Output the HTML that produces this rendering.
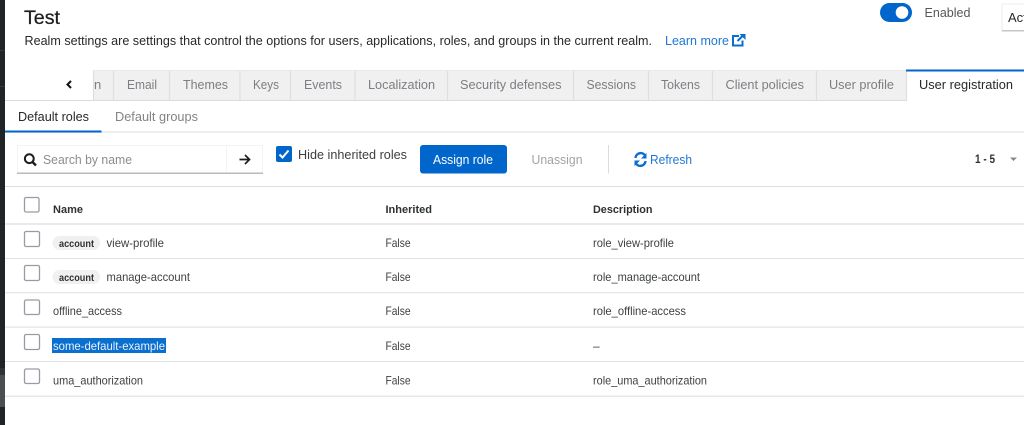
<!DOCTYPE html>
<html><head><meta charset="utf-8"><style>
html,body{margin:0;padding:0;background:#fff;overflow:hidden}
svg{display:block;filter:blur(0.3px)}
text{font-family:"Liberation Sans",sans-serif;font-size:12px;fill:#3c3f42}
.t{font-size:13px;fill:#7b7e82}
.b{font-weight:700;font-size:11px;fill:#2e3134}
.cb{fill:#fff;stroke:#9a9aa6;stroke-width:1.3}
</style></head><body>
<svg width="1024" height="425" viewBox="0 0 1024 425" xmlns="http://www.w3.org/2000/svg">
<rect width="1024" height="425" fill="#fff"/>
<rect width="5" height="425" fill="#212427"/>
<rect y="50" width="5" height="1" fill="#34373a"/><rect y="86" width="5" height="1" fill="#34373a"/>
<rect y="368" width="5" height="7" fill="#303336"/><rect y="375" width="5" height="32" fill="#4b4e51"/>

<text x="24" y="24" textLength="36" lengthAdjust="spacingAndGlyphs" style="font-size:19px;fill:#1c1e20;stroke:#1c1e20;stroke-width:.25">Test</text>
<text x="24.5" y="45" textLength="627.5" lengthAdjust="spacingAndGlyphs" style="font-size:13px;fill:#26282b">Realm settings are settings that control the options for users, applications, roles, and groups in the current realm.</text>
<text x="665" y="45" textLength="64" lengthAdjust="spacingAndGlyphs" style="font-size:13px;fill:#1f78d1">Learn more</text>
<g fill="none" stroke="#0a6fd0" stroke-width="2"><path d="M739 36h-6v9.5h9.5v-5"/><path d="M737.5 41l6.5-6.5"/></g><path d="M739.5 34h6v6z" fill="#0a6fd0"/>

<rect x="880" y="3" width="32" height="19" rx="9.5" fill="#0066cc"/><circle cx="902" cy="12.5" r="6.3" fill="#fff"/>
<text x="924.5" y="17" textLength="46" lengthAdjust="spacingAndGlyphs" style="font-size:13px;fill:#55585b">Enabled</text>
<rect x="1002" y="4" width="22" height="27" fill="#fff"/><path d="M1024 4h-22v27h22" fill="none" stroke="#eee"/><rect x="1002" y="30" width="22" height="1.5" fill="#c4c6c8"/>
<text x="1008" y="22" style="font-size:13px;fill:#26282b">Act</text>

<!-- tabs -->
<rect x="93" y="70" width="813" height="30" fill="#f0f0f0"/>
<rect x="5" y="100" width="1019" height="1" fill="#dcdcdc"/>
<path d="M93.5 70v30M113.5 70v30M169.5 70v30M240 70v30M290.5 70v30M355 70v30M447.5 70v30M573.5 70v30M648.5 70v30M712.5 70v30M816.5 70v30M906.5 70v31" stroke="#dedede" stroke-width="1.2" fill="none"/>
<rect x="93" y="70" width="813" height="1" fill="#e9e9e9"/>
<rect x="907" y="100" width="117" height="1" fill="#fff"/>
<rect x="906" y="69.5" width="118" height="2" fill="#0066cc"/>
<path d="M71 81l-3.5 3.5 3.5 3.5" fill="none" stroke="#111" stroke-width="2"/>
<text class="t" x="94" y="89" textLength="7">n</text>
<text class="t" x="127" y="89" textLength="30" lengthAdjust="spacingAndGlyphs">Email</text>
<text class="t" x="183" y="89" textLength="45" lengthAdjust="spacingAndGlyphs">Themes</text>
<text class="t" x="253" y="89" textLength="26" lengthAdjust="spacingAndGlyphs">Keys</text>
<text class="t" x="304" y="89" textLength="38" lengthAdjust="spacingAndGlyphs">Events</text>
<text class="t" x="368" y="89" textLength="67" lengthAdjust="spacingAndGlyphs">Localization</text>
<text class="t" x="460" y="89" textLength="101.5" lengthAdjust="spacingAndGlyphs">Security defenses</text>
<text class="t" x="586.5" y="89" textLength="49.5" lengthAdjust="spacingAndGlyphs">Sessions</text>
<text class="t" x="661" y="89" textLength="39" lengthAdjust="spacingAndGlyphs">Tokens</text>
<text class="t" x="725.5" y="89" textLength="78.5" lengthAdjust="spacingAndGlyphs">Client policies</text>
<text class="t" x="829" y="89" textLength="65" lengthAdjust="spacingAndGlyphs">User profile</text>
<text class="t" x="919" y="89" textLength="94" lengthAdjust="spacingAndGlyphs" style="fill:#26282b">User registration</text>

<!-- subtabs -->
<text x="18" y="121" textLength="71" lengthAdjust="spacingAndGlyphs" style="font-size:13px;fill:#26282b">Default roles</text>
<text x="115" y="121" textLength="83" lengthAdjust="spacingAndGlyphs" style="font-size:13px;fill:#808386">Default groups</text>
<rect x="5" y="131" width="1019" height="2" fill="#eeeeee"/>
<rect x="5" y="130.5" width="96.5" height="2" fill="#0066cc"/>

<!-- toolbar -->
<path d="M17.5 173v-27.5H262.5V173" fill="none" stroke="#f4f4f4"/>
<path d="M226.5 146v27" stroke="#f4f4f4"/>
<rect x="17" y="172.5" width="246" height="1.5" fill="#b8bbbe"/>
<circle cx="29.3" cy="158.7" r="4.4" fill="none" stroke="#1b1d20" stroke-width="2"/><path d="M32.5 162l3.5 3.5" stroke="#1b1d20" stroke-width="2.4"/>
<text x="43" y="164" textLength="89" lengthAdjust="spacingAndGlyphs" style="font-size:13px;fill:#8a8d90">Search by name</text>
<path d="M239.5 159.5h9.5M245 155l4.5 4.5-4.5 4.5" fill="none" stroke="#1b1d20" stroke-width="1.7"/>
<rect x="276" y="146" width="16" height="16" rx="2" fill="#0066cc"/>
<path d="M279.5 154.5l3 3 6-7" fill="none" stroke="#fff" stroke-width="2"/>
<text x="298" y="159" textLength="109" lengthAdjust="spacingAndGlyphs" style="font-size:13px;fill:#3c3f42">Hide inherited roles</text>
<rect x="420" y="145" width="87" height="28.5" rx="3" fill="#0066cc"/>
<text x="433" y="164" textLength="60" lengthAdjust="spacingAndGlyphs" style="font-size:13px;fill:#fff">Assign role</text>
<text x="531.5" y="164" textLength="51" lengthAdjust="spacingAndGlyphs" style="font-size:13px;fill:#a0a3a6">Unassign</text>
<rect x="608" y="145" width="1" height="28.5" fill="#dcdcdc"/>
<g fill="none" stroke="#0a6fd0" stroke-width="2.4"><path d="M635.5 158a5.2 5.2 0 0 1 9.5-2.6"/><path d="M645.5 161a5.2 5.2 0 0 1-9.5 2.6"/></g>
<path d="M646.5 153v5.5h-5.5zM634.5 166v-5.5h5.5z" fill="#0a6fd0"/>
<text x="650" y="164" textLength="42" lengthAdjust="spacingAndGlyphs" style="font-size:13px;fill:#1f78d1">Refresh</text>
<text x="975" y="163" textLength="20" lengthAdjust="spacingAndGlyphs" style="font-size:12px;font-weight:700;fill:#2e3134">1 - 5</text>
<path d="M1010 157.5h7l-3.5 3.5z" fill="#85888c"/>
<rect x="5" y="186" width="1019" height="1" fill="#dedede"/>

<!-- table -->
<rect class="cb" x="24.5" y="197.5" width="14.5" height="14.5" rx="1.5"/>
<text class="b" x="53" y="213" textLength="30" lengthAdjust="spacingAndGlyphs">Name</text>
<text class="b" x="385.5" y="213" textLength="46.5" lengthAdjust="spacingAndGlyphs">Inherited</text>
<text class="b" x="593" y="213" textLength="59.5" lengthAdjust="spacingAndGlyphs">Description</text>
<rect x="5" y="223" width="1019" height="2" fill="#eaeaea"/>

<rect class="cb" x="24.5" y="231.5" width="15" height="15" rx="1.5"/>
<rect x="52.5" y="236" width="47.5" height="14" rx="7" fill="#f0f0f0"/>
<text x="59" y="247" textLength="35" lengthAdjust="spacingAndGlyphs" style="font-size:10.5px;font-weight:700;fill:#2e3134">account</text>
<text x="106.5" y="247" textLength="57.5" lengthAdjust="spacingAndGlyphs">view-profile</text>
<text x="385.5" y="247" textLength="25" lengthAdjust="spacingAndGlyphs">False</text>
<text x="593" y="247" textLength="81" lengthAdjust="spacingAndGlyphs">role_view-profile</text>
<rect x="5" y="258" width="1019" height="1" fill="#e2e2e2"/>

<rect class="cb" x="24.5" y="265.5" width="15" height="15" rx="1.5"/>
<rect x="52.5" y="270" width="47.5" height="14" rx="7" fill="#f0f0f0"/>
<text x="59" y="281" textLength="35" lengthAdjust="spacingAndGlyphs" style="font-size:10.5px;font-weight:700;fill:#2e3134">account</text>
<text x="106.5" y="281" textLength="83.5" lengthAdjust="spacingAndGlyphs">manage-account</text>
<text x="385.5" y="281" textLength="25" lengthAdjust="spacingAndGlyphs">False</text>
<text x="593" y="281" textLength="107" lengthAdjust="spacingAndGlyphs">role_manage-account</text>
<rect x="5" y="292" width="1019" height="1.3" fill="#e6e6e6"/>

<rect class="cb" x="24.5" y="300" width="15" height="14.5" rx="1.5"/>
<text x="53" y="315" textLength="69" lengthAdjust="spacingAndGlyphs">offline_access</text>
<text x="385.5" y="315" textLength="25" lengthAdjust="spacingAndGlyphs">False</text>
<text x="593" y="315" textLength="93" lengthAdjust="spacingAndGlyphs">role_offline-access</text>
<rect x="5" y="326.5" width="1019" height="1.3" fill="#e6e6e6"/>

<rect class="cb" x="24.5" y="334.5" width="15" height="15" rx="1.5"/>
<rect x="52" y="338" width="114" height="15" fill="#0a6fcf"/>
<text x="53" y="350" textLength="112" lengthAdjust="spacingAndGlyphs" style="fill:#eaf3fb">some-default-example</text>
<text x="385.5" y="350" textLength="25" lengthAdjust="spacingAndGlyphs">False</text>
<text x="593" y="350" textLength="7">–</text>
<rect x="5" y="361" width="1019" height="1" fill="#e2e2e2"/>

<rect class="cb" x="24.5" y="369" width="15" height="14.5" rx="1.5"/>
<text x="53" y="384.5" textLength="90" lengthAdjust="spacingAndGlyphs">uma_authorization</text>
<text x="385.5" y="384.5" textLength="25" lengthAdjust="spacingAndGlyphs">False</text>
<text x="593" y="384.5" textLength="114" lengthAdjust="spacingAndGlyphs">role_uma_authorization</text>
<rect x="5" y="395.5" width="1019" height="1.5" fill="#e6e6e6"/>
</svg>
</body></html>
